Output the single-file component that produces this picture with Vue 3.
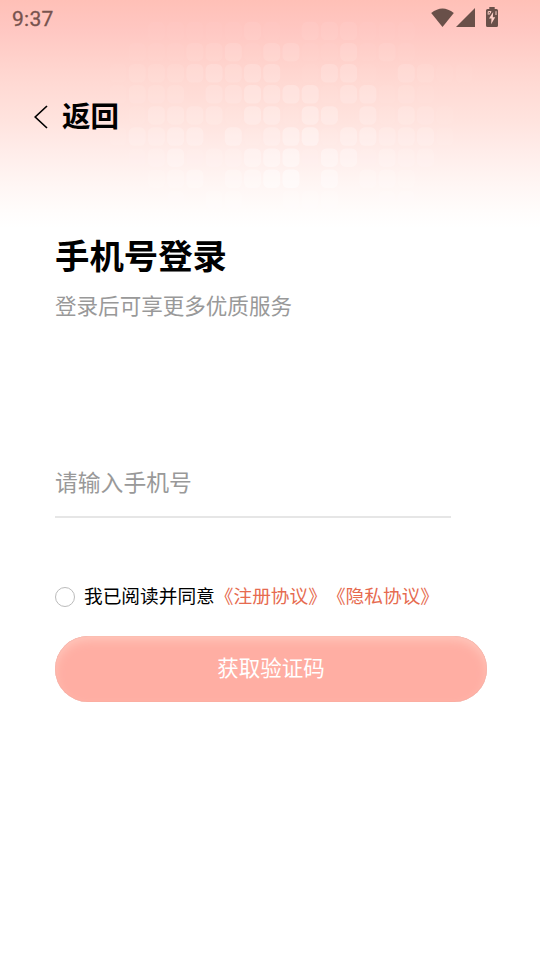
<script setup>
const rows = [
  '000000111112102221110000',
  '000001112231331131210000',
  '000012223434401441032110',
  '000012220335455144121000',
  '000001333315516504132100',
  '000013344051467155333100',
  '000001241225671651322000',
  '000001234145781613321000',
  '000001121331133301221000'
]
const tiles = rows.flatMap((row, r) =>
  [...row].map((v, c) => ({ id: `${r}-${c}`, x: 32.6 + c * 19.22, y: 21.8 + r * 21.1, o: Number(v) * (0.032 + r * 0.004) }))
)
</script>

<template>
  <main class="screen">
    <svg class="mosaic" width="540" height="230" viewBox="0 0 540 230" aria-hidden="true">
      <rect v-for="t in tiles" :key="t.id" :x="t.x" :y="t.y" width="17" height="18.5" rx="5.5" fill="#fff" :fill-opacity="t.o" />
    </svg>

    <header class="status">
      <span class="time">9:37</span>
      <svg class="wifi" width="23" height="20" viewBox="0 0 23 20"><path d="M0.2 5Q11.5 -4.2 22.8 5L11.5 19Z" /></svg>
      <svg class="signal" width="19" height="19" viewBox="0 0 19 19"><path d="M19 0V19H0Z" /></svg>
      <svg class="battery" width="12" height="20" viewBox="0 0 12 20">
        <path d="M3.3 0H8.7V2H10.5Q12 2 12 3.5V18.5Q12 20 10.5 20H1.5Q0 20 0 18.5V3.5Q0 2 1.5 2H3.3Z" />
        <path class="bolt" d="M7.2 5L3 11.6H5.5L5.1 17.2L9.2 10.2H6.8Z" />
        <path class="edge" d="M2.2 7.6V4.6H5L3.2 7.6M10 4.2V8" />
      </svg>
    </header>

    <nav class="back">
      <svg width="14" height="24" viewBox="0 0 14 24"><path d="M13 1L1.2 12L13 23" /></svg>
      <span>返回</span>
    </nav>

    <section class="login">
      <h1>手机号登录</h1>
      <p class="subtitle">登录后可享更多优质服务</p>
      <input class="phone" type="tel" placeholder="请输入手机号" />
      <div class="agreement">
        <span class="radio"></span>
        <span class="agree">我已阅读并同意</span>
        <a class="terms">《注册协议》</a>
        <a class="privacy">《隐私协议》</a>
      </div>
      <button class="submit">获取验证码</button>
    </section>
  </main>
</template>

<style>
body {
  background: #fff;
}
</style>

<style scoped>
.screen {
  position: relative;
  width: 540px;
  height: 960px;
  overflow: hidden;
  box-sizing: border-box;
  font-family: "Noto Sans CJK SC", sans-serif;
  color: #000;
  background: linear-gradient(180deg, #ffc0b7 0, #ffc7c2 30px, #ffd0ca 55px, #ffdad4 85px, #ffe3de 120px, #ffece9 150px, #fff6f4 185px, #fffcfb 210px, #fff 228px);
}
.mosaic {
  position: absolute;
  inset: 0 auto auto 0;
}
.status {
  position: relative;
  display: flex;
  align-items: flex-start;
  height: 38px;
  padding: 7px 42px 0 12px;
  box-sizing: border-box;
  fill: #695049;
}
.time {
  flex: 1;
  font: 400 21px/24px Roboto, sans-serif;
  letter-spacing: 0.3px;
  color: #77534e;
  -webkit-text-stroke: 0.3px #77534e;
}
.wifi {
  margin-top: 1px;
}
.signal {
  margin: 1px 11px 0 2px;
}
.bolt {
  fill: #ffd0c8;
}
.edge {
  fill: none;
  stroke: #ffd0c8;
  stroke-width: 1;
}
.back {
  position: relative;
  display: flex;
  align-items: center;
  gap: 14px;
  height: 44px;
  margin-top: 56px;
  padding: 0 0 0 34px;
  font-size: 28.5px;
  line-height: 44px;
  font-weight: 700;
}
.back svg {
  margin-top: 2px;
  fill: none;
  stroke: #000;
  stroke-width: 1.7;
}
.back span {
  margin-top: -2px;
}
.login {
  position: relative;
  display: flex;
  flex-direction: column;
  padding: 91px 53px 0 55px;
}
h1 {
  margin: 0;
  font-size: 34.4px;
  line-height: 50px;
  font-weight: 700;
}
.subtitle {
  margin: 10px 0 0;
  font-size: 21.55px;
  line-height: 32px;
  color: #999;
}
.phone {
  width: 396px;
  height: 72px;
  margin-top: 125px;
  padding: 0;
  box-sizing: border-box;
  border: 0;
  border-bottom: 2px solid #e6e6e6;
  outline: 0;
  background: transparent;
  font: 400 22.8px/34px "Noto Sans CJK SC", sans-serif;
}
.phone::placeholder {
  color: #999;
  opacity: 1;
}
.agreement {
  display: flex;
  align-items: center;
  height: 30px;
  margin-top: 62px;
  font-size: 18.7px;
  line-height: 30px;
  white-space: nowrap;
  text-spacing-trim: space-all;
}
.radio {
  width: 20px;
  height: 20px;
  margin: 3px 9px 0 0;
  box-sizing: border-box;
  border: 1px solid #bbb;
  border-radius: 50%;
}
.terms,
.privacy {
  color: #e66b50;
}
.submit {
  height: 66px;
  margin-top: 26px;
  padding: 0 0 5px;
  border: 0;
  border-radius: 33px;
  background: #ffaea3;
  box-shadow: inset 0 0 1px #df9488, inset 0 5px 12px -2px #ffccc1;
  color: #fff;
  font: 400 21.5px/32px "Noto Sans CJK SC", sans-serif;
}
</style>
